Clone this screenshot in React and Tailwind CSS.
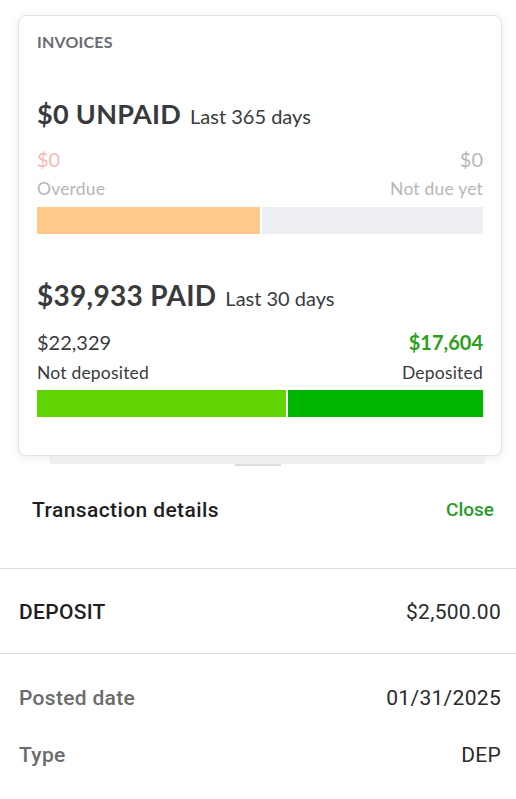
const card = { fontFamily: 'Lato, "Noto Sans", sans-serif' }

function Bar({ left, right, split, mt }) {
  return (
    <div className={`flex h-[27px] gap-[2px] ${mt}`}>
      <div className={`h-full ${left}`} style={{ width: split }} />
      <div className={`h-full flex-1 ${right}`} />
    </div>
  )
}

function Row({ label, value, labelClass, valueClass, mt }) {
  return (
    <div className={`flex items-center justify-between text-[21px] leading-[28px] ${mt}`}>
      <span className={labelClass}>{label}</span>
      <span className={valueClass}>{value}</span>
    </div>
  )
}

export default function App() {
  return (
    <div className="min-h-[799px] w-[516px] overflow-hidden bg-white">
      {/* invoices card */}
      <div
        className="ml-[18px] mt-[15px] h-[441px] w-[484px] rounded-lg border border-[#e1e2e4] bg-white px-[18px] pt-[16px] shadow-[0_2px_8px_rgba(0,0,0,0.08)]"
        style={card}
      >
        <div className="text-[16px] font-bold leading-5 tracking-[0.2px] text-[#6b6c72]">INVOICES</div>

        <div className="mt-[46px] flex items-baseline gap-[9px] leading-[32px] text-[#393a3d]">
          <span className="text-[27px] font-bold tracking-[0.3px]">$0 UNPAID</span>
          <span className="text-[20px]">Last 365 days</span>
        </div>
        <div className="mt-[15px] flex justify-between text-[20px] leading-6">
          <span className="text-[#f7b9b7]">$0</span>
          <span className="text-[#b5b6b9]">$0</span>
        </div>
        <div className="mt-[6px] flex justify-between text-[17.5px] leading-6 tracking-[0.2px] text-[#b5b6b9]">
          <span>Overdue</span>
          <span>Not due yet</span>
        </div>
        <Bar mt="mt-[6px]" left="bg-[#ffc98b]" right="bg-[#eceef1]" split="223px" />

        <div className="mt-[45px] flex items-baseline gap-[9px] leading-[32px] text-[#393a3d]">
          <span className="text-[28px] font-bold tracking-[0.3px]">$39,933 PAID</span>
          <span className="text-[20px]">Last 30 days</span>
        </div>
        <div className="mt-[16px] flex justify-between text-[20px] leading-6">
          <span className="text-[#393a3d]">$22,329</span>
          <span className="font-bold text-[#2ca01c]">$17,604</span>
        </div>
        <div className="mt-[7px] flex justify-between text-[17.5px] leading-6 tracking-[0.2px] text-[#393a3d]">
          <span>Not deposited</span>
          <span>Deposited</span>
        </div>
        <Bar mt="mt-[5px]" left="bg-[#5fd400]" right="bg-[#00b700]" split="249px" />
      </div>

      {/* card peeking behind the sheet */}
      <div className="ml-[50px] h-[8px] w-[435px] bg-[#eeeeee]" />

      {/* transaction sheet */}
      <div className="bg-white" style={{ fontFamily: 'Roboto, "Noto Sans", sans-serif' }}>
        <div className="mx-auto h-[2px] w-[46px] bg-[#dcdcdc]" />
        <div className="flex items-center justify-between pl-[32px] pr-[22px] pt-[30px] pb-[44px] leading-[28px]">
          <span className="text-[21px] font-medium tracking-[0.4px] text-[#1f1f1f]">Transaction details</span>
          <span className="text-[19px] font-medium text-[#2a9a2a]">Close</span>
        </div>
        <div className="h-px bg-[#dedede]" />
        <div className="pl-[19px] pr-[15px]">
          <Row
            mt="mt-[29px] mb-[27px]"
            label="DEPOSIT"
            value="$2,500.00"
            labelClass="font-medium tracking-[0.3px] text-[#1f1f1f]"
            valueClass="tracking-[0.3px] text-[#2a2a2a]"
          />
        </div>
        <div className="h-px bg-[#dedede]" />
        <div className="pl-[19px] pr-[15px]">
          <Row
            mt="mt-[30px]"
            label="Posted date"
            value="01/31/2025"
            labelClass="font-medium tracking-[0.3px] text-[#6b6b6b]"
            valueClass="tracking-[0.3px] text-[#2a2a2a]"
          />
          <Row
            mt="mt-[29px]"
            label="Type"
            value="DEP"
            labelClass="font-medium tracking-[0.3px] text-[#6b6b6b]"
            valueClass="tracking-[0.3px] text-[#2a2a2a]"
          />
        </div>
      </div>
    </div>
  )
}
